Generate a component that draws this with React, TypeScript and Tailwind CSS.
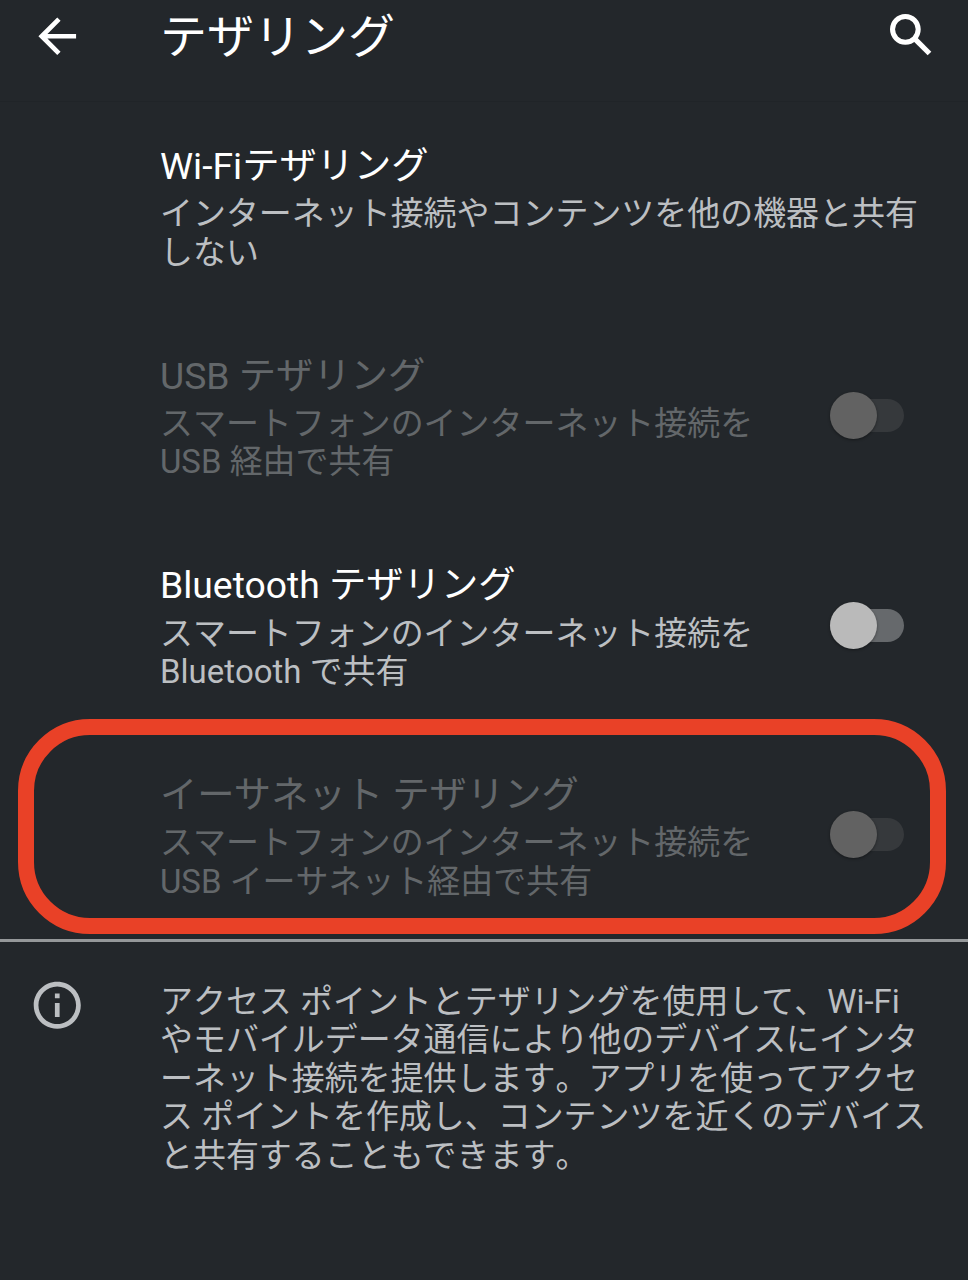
import { MdArrowBack, MdInfoOutline } from "react-icons/md";

type Item = {
  title: string;
  lines: string[];
  toggle?: boolean;
  disabled?: boolean;
  highlighted?: boolean;
};

const items: Item[] = [
  {
    title: "Wi-Fiテザリング",
    lines: ["インターネット接続やコンテンツを他の機器と共有", "しない"],
  },
  {
    title: "USB テザリング",
    lines: ["スマートフォンのインターネット接続を", "USB 経由で共有"],
    toggle: true,
    disabled: true,
  },
  {
    title: "Bluetooth テザリング",
    lines: ["スマートフォンのインターネット接続を", "Bluetooth で共有"],
    toggle: true,
  },
  {
    title: "イーサネット テザリング",
    lines: ["スマートフォンのインターネット接続を", "USB イーサネット経由で共有"],
    toggle: true,
    disabled: true,
    highlighted: true,
  },
];

const note = [
  "アクセス ポイントとテザリングを使用して、Wi-Fi",
  "やモバイルデータ通信により他のデバイスにインタ",
  "ーネット接続を提供します。アプリを使ってアクセ",
  "ス ポイントを作成し、コンテンツを近くのデバイス",
  "と共有することもできます。",
];

function SearchIcon({ className }: { className?: string }) {
  return (
    <svg viewBox="0 0 24 24" fill="none" stroke="currentColor" className={className}>
      <circle cx="9.5" cy="9.5" r="5.45" strokeWidth="2.15" />
      <path d="M13.3 13.3 19.75 19.75" strokeWidth="2.2" />
    </svg>
  );
}

function Toggle({ disabled }: { disabled?: boolean }) {
  return (
    <button
      type="button"
      role="switch"
      aria-checked={false}
      disabled={disabled}
      className="mt-[38.4px] mr-16 flex h-[47px] w-[74px] shrink-0 items-center"
    >
      <span
        className={`flex h-[33px] w-[74px] items-center rounded-full ${
          disabled ? "bg-[#36393c]" : "bg-[#66696c]"
        }`}
      >
        <span
          className={`size-[47px] shrink-0 rounded-full shadow-[0_1px_3px_rgba(0,0,0,0.4)] ${
            disabled ? "bg-[#626262]" : "bg-[#bababa]"
          }`}
        />
      </span>
    </button>
  );
}

function Row({ item }: { item: Item }) {
  return (
    <li className="relative flex h-[209.6px] items-start justify-between pt-[41px] pl-[160px]">
      <div className="whitespace-nowrap">
        <h2
          className={`text-[37.3px] leading-[44px] ${item.disabled ? "text-[#63676a]" : "text-white"}`}
        >
          {item.title}
        </h2>
        <p
          className={`mt-[7.4px] text-[32.96px] leading-[38.4px] [font-kerning:none] ${
            item.disabled ? "text-[#63676a]" : "text-[#bcbfc2]"
          }`}
        >
          {item.lines.map((line) => (
            <span key={line} className="block">
              {line}
            </span>
          ))}
        </p>
      </div>
      {item.toggle && <Toggle disabled={item.disabled} />}
      {item.highlighted && (
        <div className="pointer-events-none absolute -top-[13px] left-[18px] h-[215px] w-[928px] rounded-[72px] border-16 border-[#e94127]" />
      )}
    </li>
  );
}

export default function App() {
  return (
    <div
      lang="ja"
      className="flex h-[1280px] w-[968px] flex-col overflow-hidden bg-[#23272b] font-['Roboto','Noto_Sans_CJK_JP',sans-serif]"
    >
      <header className="flex h-[102px] shrink-0 items-start border-b border-[#202428] text-white">
        <MdArrowBack className="mt-[7.5px] ml-[28.5px] size-[56.5px]" />
        <h1 className="mt-[9px] ml-[75px] flex-1 text-[47px] leading-[56px]">テザリング</h1>
        <SearchIcon className="mt-[6.5px] mr-[28.5px] size-[56.5px]" />
      </header>
      <main className="flex flex-col">
        <ul className="h-[837px] pt-[1px]">
          {items.map((item) => (
            <Row key={item.title} item={item} />
          ))}
        </ul>
        <section className="flex items-start border-t-3 border-[#95989a] pt-[41px]">
          <MdInfoOutline className="-mt-[6.5px] ml-[28.5px] size-[56.5px] shrink-0 text-[#bcbfc2]" />
          <p className="ml-[75px] text-[32.96px] leading-[38.4px] whitespace-nowrap text-[#bcbfc2] [font-kerning:none]">
            {note.map((line) => (
              <span key={line} className="block">
                {line}
              </span>
            ))}
          </p>
        </section>
      </main>
    </div>
  );
}
